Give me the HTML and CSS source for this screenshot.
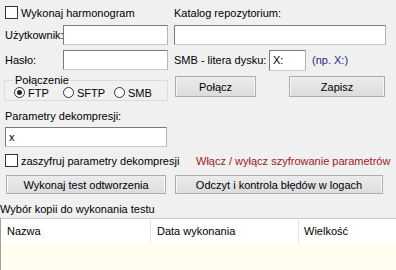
FILE: index.html
```html
<!DOCTYPE html>
<html lang="pl">
<head>
  <meta charset="UTF-8">
  <title>Test odtworzenia</title>
  <link rel="stylesheet" href="styles.css">
</head>
<body>
  <div class="form">
    <div class="row row-top">
      <div class="left">
        <label class="check"><span class="box"></span>Wykonaj harmonogram</label>
      </div>
      <div class="right">Katalog repozytorium:</div>
    </div>

    <div class="row row-field">
      <div class="left">
        <span class="lbl">Użytkownik:</span>
        <span class="input w-user"></span>
      </div>
      <div class="right">
        <span class="input w-repo"></span>
      </div>
    </div>

    <div class="row row-field">
      <div class="left">
        <span class="lbl">Hasło:</span>
        <span class="input w-user"></span>
      </div>
      <div class="right">
        <span class="lbl lbl-smb">SMB - litera dysku:</span>
        <span class="input w-drive">X:</span>
        <span class="hint">(np. X:)</span>
      </div>
    </div>

    <div class="row row-group">
      <fieldset class="group">
        <legend>Połączenie</legend>
        <label class="radio r-ftp"><span class="dot on"></span>FTP</label>
        <label class="radio r-sftp"><span class="dot"></span>SFTP</label>
        <label class="radio"><span class="dot"></span>SMB</label>
      </fieldset>
      <div class="right btns">
        <button class="btn w-connect">Połącz</button>
        <button class="btn w-save">Zapisz</button>
      </div>
    </div>

    <div class="row row-label">Parametry dekompresji:</div>

    <div class="row row-param">
      <span class="input w-param">x</span>
    </div>

    <div class="row row-crypt">
      <div class="left">
        <label class="check nowrap"><span class="box"></span>zaszyfruj parametry dekompresji</label>
      </div>
      <div class="warn">Włącz / wyłącz szyfrowanie parametrów</div>
    </div>

    <div class="row row-actions">
      <button class="btn w-test">Wykonaj test odtworzenia</button>
      <button class="btn w-logs">Odczyt i kontrola błędów w logach</button>
    </div>
  </div>

  <div class="caption">Wybór kopii do wykonania testu</div>

  <div class="list">
    <div class="list-head">
      <div class="col c-name">Nazwa</div>
      <div class="col c-date">Data wykonania</div>
      <div class="col c-size">Wielkość</div>
    </div>
    <div class="list-body"></div>
  </div>
</body>
</html>
```

FILE: styles.css
```css
body {
  margin: 0;
  background-color: #f0f0f0;
  font-family: 'Liberation Sans', Arial, sans-serif;
  font-size: 11px;
  color: #000;
  width: 396px;
  height: 270px;
  overflow: hidden;
}
.form {
  padding-left: 5px;
}
.row {
  display: flex;
  align-items: center;
}
.left {
  width: 163px;
  flex-shrink: 0;
  display: flex;
  align-items: center;
}
.right {
  margin-left: 6px;
  display: flex;
  align-items: center;
}
.row-top {
  margin-top: 6px;
  height: 13px;
}
.row-field {
  margin-top: 6px;
  height: 20px;
}
.row-field + .row-field {
  margin-top: 5px;
}
.row-group {
  margin-top: 5px;
  height: 26px;
  align-items: flex-start;
}
.row-label {
  margin-top: 8px;
  height: 14px;
}
.row-param {
  margin-top: 4px;
  height: 20px;
}
.row-crypt {
  margin-top: 7px;
  height: 13px;
}
.row-actions {
  margin-top: 8px;
  height: 19px;
}

.check {
  display: flex;
  align-items: center;
}
.nowrap {
  white-space: nowrap;
}
.box {
  flex-shrink: 0;
  width: 11px;
  height: 11px;
  border: 1px solid #333;
  background: #fff;
  margin-right: 3px;
}
.lbl {
  width: 58px;
}
.lbl-smb {
  width: 95px;
}
.input {
  box-sizing: border-box;
  height: 20px;
  border: 1px solid #7a7a7a;
  border-right-color: #b5b5b5;
  border-bottom-color: #c8c8c8;
  background: #fff;
  padding: 3px 3px 0;
  line-height: 13px;
}
.w-user { width: 105px; }
.w-repo { width: 212px; }
.w-drive { width: 37px; height: 21px; }
.w-param { width: 162px; }
.hint {
  margin-left: 6px;
  color: #262690;
}

.group {
  box-sizing: border-box;
  margin: 0 0 0 -1px;
  width: 164px;
  height: 26px;
  padding: 0 0 0 9px;
  border: 1px solid #dcdcdc;
  display: flex;
  align-items: center;
}
.group legend {
  padding: 0 1px;
  margin-left: 0;
  line-height: 10px;
}
.radio {
  display: flex;
  align-items: center;
  margin-top: 0;
}
.r-ftp { width: 49px; }
.r-sftp { width: 51px; }
.dot {
  box-sizing: border-box;
  width: 11px;
  height: 11px;
  border: 1px solid #333;
  border-radius: 50%;
  background: #fff;
  margin-right: 3px;
  display: flex;
  align-items: center;
  justify-content: center;
}
.dot.on::after {
  content: "";
  width: 5px;
  height: 5px;
  border-radius: 50%;
  background: #222;
}

.btns {
  margin-left: 7px;
  margin-top: 1px;
}
.btn {
  box-sizing: border-box;
  height: 21px;
  border: 1px solid #adadad;
  background: linear-gradient(#ececec, #dcdcdc);
  box-shadow: inset 1px 0 0 #f8f8f8, inset -1px 0 0 #f8f8f8;
  font-family: inherit;
  font-size: 11px;
  color: #000;
  padding: 0;
}
.w-connect { width: 81px; }
.w-save { width: 96px; margin-left: 33px; }
.w-test { width: 160px; height: 19px; margin-left: 1px; }
.w-logs { width: 208px; height: 19px; margin-left: 9px; }

.warn {
  margin-left: 28px;
  color: #a11a1a;
  white-space: nowrap;
}

.caption {
  margin-top: 9px;
  height: 13px;
  line-height: 13px;
}
.list {
  margin-top: 2px;
  border-top: 1px solid #c8c8c8;
  border-left: 1px solid #a0a0a0;
  height: 60px;
}
.list-head {
  display: flex;
  height: 24px;
  background: #fff;
}
.col {
  display: flex;
  align-items: center;
  padding-left: 6px;
  box-sizing: border-box;
  border-right: 1px solid #e5e5e5;
}
.c-name { width: 150px; }
.c-date { width: 148px; }
.c-size { flex: 1; border-right: none; padding-left: 5px; }
.list-body {
  height: 40px;
  background: #fffcf0;
}
```
